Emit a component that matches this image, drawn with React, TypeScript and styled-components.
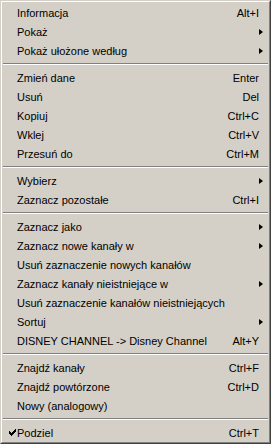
import React from "react";
import styled, { createGlobalStyle } from "styled-components";

const Global = createGlobalStyle`
  html, body { margin: 0; padding: 0; background: #d4d0c8; }
  body { font-family: "Liberation Sans", Arial, sans-serif; }
`;

const Menu = styled.div`
  width: 271px;
  height: 444px;
  box-sizing: border-box;
  background: #d4d0c8;
  border-top: 1px solid #d4d0c8;
  border-left: 1px solid #d4d0c8;
  border-right: 1px solid #404040;
  border-bottom: 1px solid #404040;
  display: flex;
`;

const Inner = styled.div`
  flex: 1;
  box-sizing: border-box;
  border-top: 1px solid #ffffff;
  border-left: 1px solid #ffffff;
  border-right: 1px solid #808080;
  border-bottom: 1px solid #808080;
  padding: 1px 0 0 0;
  display: flex;
  flex-direction: column;
`;

const Row = styled.div<{ $arrow?: boolean }>`
  height: 19px;
  display: flex;
  align-items: center;
  padding-right: ${(p) => (p.$arrow ? "6px" : "10px")};
  font-size: 11px;
  color: #000;
  white-space: nowrap;
`;

const CheckCell = styled.div`
  width: 15px;
  height: 19px;
  display: flex;
  align-items: center;
  justify-content: flex-end;
  flex-shrink: 0;
`;

const Label = styled.span`
  flex: 1;
`;

const Shortcut = styled.span`
  text-align: right;
`;

const Arrow = styled.span`
  width: 0;
  height: 0;
  border-top: 3.5px solid transparent;
  border-bottom: 3.5px solid transparent;
  border-left: 4px solid #000;
`;

const Separator = styled.div`
  height: 8px;
  display: flex;
  flex-direction: column;
  justify-content: center;
  padding: 0 1px;
  &::before {
    content: "";
    display: block;
    height: 1px;
    background: #808080;
  }
  &::after {
    content: "";
    display: block;
    height: 1px;
    background: #ffffff;
  }
`;

type Item =
  | { sep: true }
  | { label: string; shortcut?: string; arrow?: boolean; checked?: boolean; sep?: false };

const items: Item[] = [
  { label: "Informacja", shortcut: "Alt+I" },
  { label: "Pokaż", arrow: true },
  { label: "Pokaż ułożone według", arrow: true },
  { sep: true },
  { label: "Zmień dane", shortcut: "Enter" },
  { label: "Usuń", shortcut: "Del" },
  { label: "Kopiuj", shortcut: "Ctrl+C" },
  { label: "Wklej", shortcut: "Ctrl+V" },
  { label: "Przesuń do", shortcut: "Ctrl+M" },
  { sep: true },
  { label: "Wybierz", arrow: true },
  { label: "Zaznacz pozostałe", shortcut: "Ctrl+I" },
  { sep: true },
  { label: "Zaznacz jako", arrow: true },
  { label: "Zaznacz nowe kanały w", arrow: true },
  { label: "Usuń zaznaczenie nowych kanałów" },
  { label: "Zaznacz kanały nieistniejące w", arrow: true },
  { label: "Usuń zaznaczenie kanałów nieistniejących" },
  { label: "Sortuj", arrow: true },
  { label: "DISNEY CHANNEL -> Disney Channel", shortcut: "Alt+Y" },
  { sep: true },
  { label: "Znajdź kanały", shortcut: "Ctrl+F" },
  { label: "Znajdź powtórzone", shortcut: "Ctrl+D" },
  { label: "Nowy (analogowy)" },
  { sep: true },
  { label: "Podziel", shortcut: "Ctrl+T", checked: true },
];

const Check = () => (
  <svg width="7" height="7" viewBox="0 0 7 7" style={{ marginRight: 1 }}>
    <path d="M0 2h1v1h1v1h1v-1h1v-1h1v-1h1v-1h1v3h-1v1h-1v1h-1v1h-1v1h-1v-1h-1v-1h-1z" fill="#000" />
  </svg>
);

export default function App() {
  return (
    <>
      <Global />
      <Menu>
        <Inner>
          {items.map((it, i) =>
            it.sep ? (
              <Separator key={i} />
            ) : (
              <Row key={i} $arrow={it.arrow}>
                <CheckCell>{it.checked ? <Check /> : null}</CheckCell>
                <Label>{it.label}</Label>
                {it.shortcut ? <Shortcut>{it.shortcut}</Shortcut> : null}
                {it.arrow ? <Arrow /> : null}
              </Row>
            )
          )}
        </Inner>
      </Menu>
    </>
  );
}
